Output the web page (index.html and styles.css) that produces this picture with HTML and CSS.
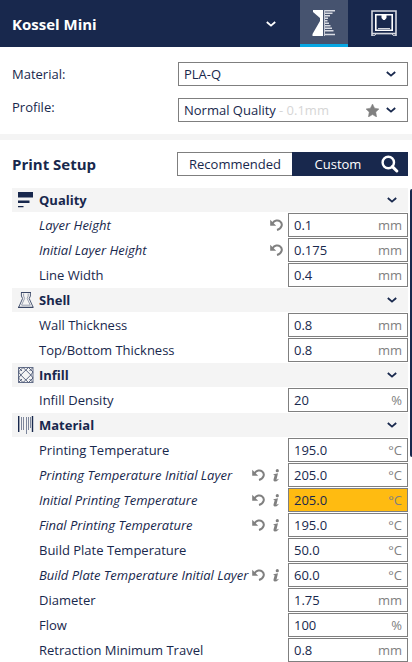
FILE: index.html
```
<!DOCTYPE html>
<html lang="en">
<head>
<meta charset="utf-8">
<meta name="viewport" content="width=device-width, initial-scale=1">
<title>Kossel Mini</title>
<link rel="stylesheet" href="styles.css">
</head>
<body>
<svg class="defs" width="0" height="0" aria-hidden="true">
  <symbol id="chevron" viewBox="0 0 10 6"><path d="M0.8 1L5 4.6L9.2 1" fill="none" stroke="currentColor" stroke-width="1.8"/></symbol>
  <symbol id="revert" viewBox="0 0 13 12"><path d="M2.5 4.3C4.5 1.2 8 0.6 10.2 2.4C13.2 5 11.8 9.6 7 11" fill="none" stroke="currentColor" stroke-width="2"/><path d="M0.2 0.8V6.8H6.2Z" fill="currentColor"/></symbol>
  <symbol id="info" viewBox="0 0 6 13"><circle cx="4.3" cy="1.7" r="1.6" fill="currentColor"/><path d="M0.6 5.2L5 4.2L3.5 10.6Q3.6 11.2 5.2 9.8L5.6 10.4Q3.5 12.8 1.6 12.6Q0.1 12.2 0.5 10.6L1.7 6.3L0.5 6.1Z" fill="currentColor"/></symbol>
</svg>

<header class="topbar">
  <label class="machine">
    <select aria-label="Printer"><option>Kossel Mini</option></select>
    <svg class="chevron"><use href="#chevron"/></svg>
  </label>
  <button class="stage stage-active" type="button" aria-label="Prepare">
    <svg width="24" height="26" viewBox="0 0 24 26">
      <path d="M1 0H11V26H0.5V24L8 11V8L1 2Z" fill="#fff"/>
      <path d="M12 0.8H23M12 3.3H20.5M12 5.8H18M12 8.3H16M12 10.8H15.5M12 13.3H17M12 15.8H18.5M12 18.3H20M12 20.8H21.5M12 24.5H23" stroke="#d9dce4" stroke-width="1.6"/>
      <path d="M12.5 0V26" stroke="#c6cad5" stroke-width="1"/>
    </svg>
  </button>
  <button class="stage" type="button" aria-label="Monitor">
    <svg width="26" height="26" viewBox="0 0 26 26" fill="none" stroke="#d5d8e0">
      <path d="M1 26V1H25V26M1 23.5H25" stroke-width="1.6"/>
      <path d="M1 25.3H4L5 23.7H21L22 25.3H25" stroke-width="1"/>
      <path d="M4.8 4.8H21.2V20.2H4.8Z" stroke="#fff" stroke-width="1.6"/>
      <path d="M7 18.5H19" stroke-width="1"/>
      <path d="M10.5 5H15.5V8L13.8 10H12.2L10.5 8Z" fill="#fff" stroke="none"/>
    </svg>
  </button>
</header>

<section class="presets">
  <div class="preset-labels">
    <label for="material">Material:</label>
    <label for="profile">Profile:</label>
  </div>
  <div class="preset-fields">
    <div class="combo">
      <select id="material"><option>PLA-Q</option></select>
      <svg class="chevron"><use href="#chevron"/></svg>
    </div>
    <div class="combo">
      <select id="profile"><option>Normal Quality</option></select>
      <span class="hint">- 0.1mm</span>
      <svg class="star" viewBox="0 0 13 13"><path d="M6.5 0L8.6 4.2L13 4.9L9.8 8.1L10.6 13L6.5 10.6L2.4 13L3.2 8.1L0 4.9L4.4 4.2Z" fill="#808080" stroke="#808080" stroke-width="0.5"/></svg>
      <svg class="chevron"><use href="#chevron"/></svg>
    </div>
  </div>
</section>

<main class="setup">
  <div class="setup-head">
    <h1>Print Setup</h1>
    <div class="modes">
      <button class="mode" type="button">Recommended</button>
      <div class="mode-current">
        <button class="mode-custom" type="button">Custom</button>
        <button class="search" type="button" aria-label="Search settings">
          <svg width="18" height="18" viewBox="0 0 18 18" fill="none" stroke="#fff"><circle cx="7.3" cy="7.5" r="5.7" stroke-width="2.4"/><path d="M11.4 11.6L15.8 16" stroke-width="3" stroke-linecap="round"/></svg>
        </button>
      </div>
    </div>
  </div>

  <div class="scroll-area">
    <div class="settings">
      <button class="category" type="button">
        <svg class="cat-icon" viewBox="0 0 16 16" fill="#18284d"><path d="M0 0H15V5.6H0ZM0 8.4H11.5V11H0ZM0 14H5.5V15.2H0Z"/></svg>
        <span>Quality</span><svg class="chevron"><use href="#chevron"/></svg>
      </button>
      <div class="row changed">
        <label for="s1">Layer Height</label>
        <button class="act" type="button" aria-label="Reset"><svg class="revert"><use href="#revert"/></svg></button>
        <div class="field"><input id="s1" value="0.1"><span>mm</span></div>
      </div>
      <div class="row changed">
        <label for="s2">Initial Layer Height</label>
        <button class="act" type="button" aria-label="Reset"><svg class="revert"><use href="#revert"/></svg></button>
        <div class="field"><input id="s2" value="0.175"><span>mm</span></div>
      </div>
      <div class="row">
        <label for="s3">Line Width</label>
        <div class="field"><input id="s3" value="0.4"><span>mm</span></div>
      </div>

      <button class="category" type="button">
        <svg class="cat-icon" viewBox="0 0 16 16" fill="none" stroke="#3a4766"><path d="M3 0.5H13M0 15.3H15.5" stroke-width="1.2"/><path d="M3.4 0.5V4L4.6 6.5L0.8 15M12.4 0.5V4L11.2 6.5L15 15" stroke-width="0.9"/><path d="M5.6 1.5V4L6.6 6.5L3.6 13M10.2 1.5V4L9.2 6.5L12.2 13M3.5 13.2H12.5" stroke="#8d95a7" stroke-width="0.9"/></svg>
        <span>Shell</span><svg class="chevron"><use href="#chevron"/></svg>
      </button>
      <div class="row">
        <label for="s4">Wall Thickness</label>
        <div class="field"><input id="s4" value="0.8"><span>mm</span></div>
      </div>
      <div class="row">
        <label for="s5">Top/Bottom Thickness</label>
        <div class="field"><input id="s5" value="0.8"><span>mm</span></div>
      </div>

      <button class="category" type="button">
        <svg class="cat-icon" viewBox="0 0 16 16" fill="none" stroke="#4a5673"><path d="M0.5 0.5H15V15.5H0.5Z" stroke="#66708a"/><path d="M0.5 5L5 0.5M10.5 0.5L15 5M15 11L10.5 15.5M5 15.5L0.5 11M0.5 0.5L4 4M15 0.5L11.5 4M0.5 15.5L4 12M15 15.5L11.5 12M7.8 3L12.8 8L7.8 13L2.8 8ZM5 0.5L7.8 3L10.5 0.5M15 5L12.8 8L15 11M10.5 15.5L7.8 13L5 15.5M0.5 11L2.8 8L0.5 5" stroke-width="0.9"/></svg>
        <span>Infill</span><svg class="chevron"><use href="#chevron"/></svg>
      </button>
      <div class="row">
        <label for="s6">Infill Density</label>
        <div class="field"><input id="s6" value="20"><span>%</span></div>
      </div>

      <button class="category" type="button">
        <svg class="cat-icon cat-icon-tall" viewBox="0 0 16 18" stroke="#18284d"><path d="M0.7 0V16M14.5 0V16" stroke-width="1.4"/><path d="M3.5 1V14M5.5 1V14M10.5 1V14M12.5 1V12M8.5 1V18" stroke="#7d869b" stroke-width="1"/></svg>
        <span>Material</span><svg class="chevron"><use href="#chevron"/></svg>
      </button>
      <div class="row">
        <label for="s7">Printing Temperature</label>
        <div class="field"><input id="s7" value="195.0"><span>°C</span></div>
      </div>
      <div class="row changed">
        <label for="s8">Printing Temperature Initial Layer</label>
        <button class="act" type="button" aria-label="Reset"><svg class="revert"><use href="#revert"/></svg></button>
        <button class="act" type="button" aria-label="Info"><svg class="info"><use href="#info"/></svg></button>
        <div class="field"><input id="s8" value="205.0"><span>°C</span></div>
      </div>
      <div class="row changed">
        <label for="s9">Initial Printing Temperature</label>
        <button class="act" type="button" aria-label="Reset"><svg class="revert"><use href="#revert"/></svg></button>
        <button class="act" type="button" aria-label="Info"><svg class="info"><use href="#info"/></svg></button>
        <div class="field warning"><input id="s9" value="205.0"><span>°C</span></div>
      </div>
      <div class="row changed">
        <label for="s10">Final Printing Temperature</label>
        <button class="act" type="button" aria-label="Reset"><svg class="revert"><use href="#revert"/></svg></button>
        <button class="act" type="button" aria-label="Info"><svg class="info"><use href="#info"/></svg></button>
        <div class="field"><input id="s10" value="195.0"><span>°C</span></div>
      </div>
      <div class="row">
        <label for="s11">Build Plate Temperature</label>
        <div class="field"><input id="s11" value="50.0"><span>°C</span></div>
      </div>
      <div class="row changed">
        <label for="s12">Build Plate Temperature Initial Layer</label>
        <button class="act" type="button" aria-label="Reset"><svg class="revert"><use href="#revert"/></svg></button>
        <button class="act" type="button" aria-label="Info"><svg class="info"><use href="#info"/></svg></button>
        <div class="field"><input id="s12" value="60.0"><span>°C</span></div>
      </div>
      <div class="row">
        <label for="s13">Diameter</label>
        <div class="field"><input id="s13" value="1.75"><span>mm</span></div>
      </div>
      <div class="row">
        <label for="s14">Flow</label>
        <div class="field"><input id="s14" value="100"><span>%</span></div>
      </div>
      <div class="row">
        <label for="s15">Retraction Minimum Travel</label>
        <div class="field"><input id="s15" value="0.8"><span>mm</span></div>
      </div>
    </div>
    <div class="thumb"></div>
  </div>
</main>
</body>
</html>
```
FILE: styles.css
```
* { box-sizing: border-box; }

body {
  margin: 0;
  background: #fff;
  color: #18284d;
  font: 13px/18px "Open Sans", "Noto Sans", sans-serif;
}

button, select, input {
  margin: 0;
  padding: 0;
  border: 0;
  border-radius: 0;
  background: none;
  color: inherit;
  font: inherit;
}

select { appearance: none; }
svg { display: block; flex: none; }
.defs { position: absolute; }
.chevron { width: 10px; height: 6px; margin-left: auto; }

.topbar {
  display: flex;
  height: 47px;
  background: #18284d;
  color: #fff;
}

.machine {
  display: flex;
  flex: 1;
  align-items: center;
  padding: 0 24px 0 12px;
  font-size: 15px;
  font-weight: 700;
}

.stage {
  display: flex;
  width: 48px;
  align-items: center;
  justify-content: center;
  padding-top: 1px;
  border-bottom: 3px solid transparent;
}

.stage + .stage { width: 64px; padding-left: 8px; }
.stage-active { background: #46536f; border-color: #08a7e3; }

.presets {
  display: flex;
  justify-content: space-between;
  padding: 15px 4px 12px 12px;
  border-bottom: 6px solid #f4f4f4;
}

.preset-labels {
  display: flex;
  flex-direction: column;
  gap: 15px;
  padding-top: 3px;
}

.preset-fields {
  display: flex;
  width: 230px;
  flex-direction: column;
  gap: 12px;
}

.combo {
  display: flex;
  height: 24px;
  align-items: center;
  gap: 3px;
  padding: 0 11px 0 5px;
  border: 1px solid #7f7f7f;
}

.hint { color: #d6d6d6; }
.star { width: 13px; height: 13px; margin-left: auto; }
.star + .chevron { margin-left: 4px; }

.setup { padding: 12px 0 0 12px; }

.setup-head {
  display: flex;
  align-items: center;
  justify-content: space-between;
  padding-right: 4px;
}

h1 { margin: 0; font-size: 15px; line-height: 20px; }

.modes { display: flex; width: 231px; height: 24px; }
.mode { width: 115px; border: 1px solid #7f7f7f; border-right: 0; }
.mode-current { display: flex; flex: 1; background: #18284d; color: #fff; }
.mode-custom { flex: 1; padding-left: 12px; }
.search { display: flex; width: 36px; align-items: center; justify-content: center; }

.scroll-area { display: flex; gap: 2px; padding-top: 12px; }

.settings {
  display: flex;
  flex: 1;
  min-width: 0;
  flex-direction: column;
  gap: 1px;
}

.thumb {
  width: 2px;
  height: 268px;
  margin-top: 1px;
  border-radius: 2px 0 0 2px;
  background: #18284d;
}

.category {
  display: flex;
  height: 24px;
  align-items: center;
  gap: 5px;
  padding: 0 11px 0 6px;
  background: #f4f4f4;
  font-weight: 700;
}

.cat-icon { width: 16px; height: 16px; }
.cat-icon-tall { height: 18px; }

.row {
  display: flex;
  height: 24px;
  align-items: center;
  padding-left: 27px;
}

.row label { flex: 1; min-width: 0; white-space: nowrap; }
.changed label { font-style: italic; }

.act {
  display: flex;
  width: 18px;
  height: 18px;
  flex: none;
  align-items: center;
  justify-content: center;
  color: #808080;
}

.revert { width: 13px; height: 12px; }
.info { width: 6px; height: 13px; }

.field {
  display: flex;
  width: 120px;
  height: 24px;
  flex: none;
  align-items: center;
  margin-left: 3px;
  padding: 0 5px;
  border: 1px solid #7f7f7f;
}

.field input { flex: 1; min-width: 0; outline: 0; }
.field span { color: #808080; }
.warning { background: #ffbb11; }
```
